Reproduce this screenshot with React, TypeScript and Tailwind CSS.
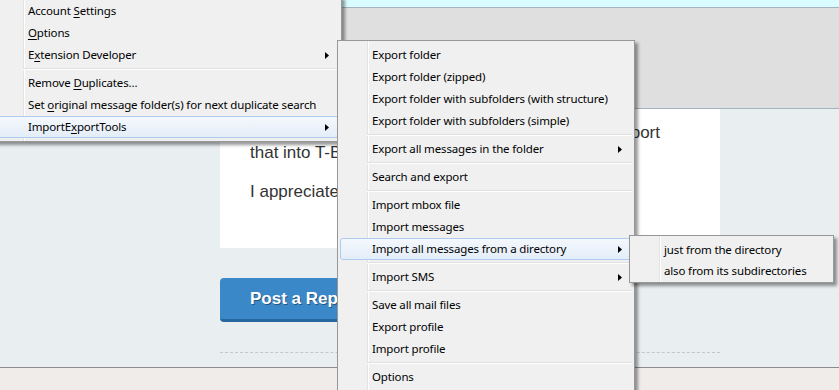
import React from "react";

type Entry = { label: React.ReactNode; sub?: boolean; hl?: boolean } | "sep";

function Arrow() {
  return (
    <svg width="4" height="7" viewBox="0 0 4 7">
      <path d="M0 0 L4 3.5 L0 7 Z" fill="#000" />
    </svg>
  );
}

function Menu({ items, className, rowH = "h-[22px]" }: { items: Entry[]; className: string; rowH?: string }) {
  return (
    <div
      className={`absolute border border-[#979797] bg-[#f0f0f0] px-[2px] py-[3px] shadow-[3px_3px_3px_rgba(0,0,0,0.4)] font-['Noto_Sans',sans-serif] text-[11.5px] tracking-[-0.15px] text-black ${className}`}
    >
      {/* gutter */}
      <div className="absolute top-0 bottom-0 left-[29px] w-px bg-[#e2e3e3] shadow-[1px_0_0_#ffffff]" />
      {items.map((it, i) =>
        it === "sep" ? (
          <div key={i} className="relative h-[6px] ml-[27px] pt-[2px]">
            <div className="h-px bg-[#e0e0e0] shadow-[0_1px_0_#ffffff]" />
          </div>
        ) : (
          <div
            key={i}
            className={`relative flex ${rowH} items-center justify-between pl-[31px] pr-[9px] rounded-[3px] border whitespace-nowrap ${
              it.hl ? "border-[#aecbee] bg-gradient-to-b from-[#f4f8fd] to-[#e4edf8]" : "border-transparent"
            }`}
          >
            <span>{it.label}</span>
            {it.sub && <Arrow />}
          </div>
        )
      )}
    </div>
  );
}

const u = (s: string) => <span className="underline underline-offset-2">{s}</span>;

export default function App() {
  const toolsMenu: Entry[] = [
    { label: <>Account {u("S")}ettings</> },
    { label: <>{u("O")}ptions</> },
    { label: <>E{u("x")}tension Developer</>, sub: true },
    "sep",
    { label: <>Remove {u("D")}uplicates...</> },
    { label: <>Set {u("o")}riginal message folder(s) for next duplicate search</> },
    { label: <>ImportE{u("x")}portTools</>, sub: true, hl: true },
  ];

  const ietMenu: Entry[] = [
    { label: "Export folder" },
    { label: "Export folder (zipped)" },
    { label: "Export folder with subfolders (with structure)" },
    { label: "Export folder with subfolders (simple)" },
    "sep",
    { label: "Export all messages in the folder", sub: true },
    "sep",
    { label: "Search and export" },
    "sep",
    { label: "Import mbox file" },
    { label: "Import messages" },
    { label: "Import all messages from a directory", sub: true, hl: true },
    "sep",
    { label: "Import SMS", sub: true },
    "sep",
    { label: "Save all mail files" },
    { label: "Export profile" },
    { label: "Import profile" },
    "sep",
    { label: "Options" },
  ];

  const dirMenu: Entry[] = [{ label: "just from the directory" }, { label: "also from its subdirectories" }];

  return (
    <div className="relative w-[839px] h-[390px] overflow-hidden bg-[#e9eef1] flex flex-col">
      {/* browser chrome */}
      <div className="h-[8px] shrink-0 bg-[#d9fdff] border-b border-[#a3b3c3]" />
      <div className="h-[101px] shrink-0 bg-[#dfdfdf] border-b border-[#a3b3c3]" />

      {/* forum page */}
      <div className="flex-1 pl-[220px] flex flex-col font-['Liberation_Sans',Arial,sans-serif]">
        <div className="w-[500px] h-[139px] shrink-0 bg-white pl-[30px] pt-[14px] text-[17px] leading-[20px] text-[#333]">
          <div className="w-[410px] text-right whitespace-nowrap">I have a lot of saved mails that I want to export</div>
          <div className="whitespace-nowrap">that into T-Bird.</div>
          <div className="mt-[19px] whitespace-nowrap">I appreciate any help.</div>
        </div>
        <button className="mt-[30px] w-[190px] h-[44px] shrink-0 rounded-[4px] bg-[#3b88c9] border-b-[3px] border-[#25679f] pl-[30px] text-left text-[17px] font-bold text-white [text-shadow:1px_1px_0_rgba(0,0,0,0.4)]">
          Post a Reply
        </button>
        <div className="mt-[30px] w-[500px] border-t border-dashed border-[#c3c7cb]" />
      </div>

      <div className="h-[23px] shrink-0 border-t border-[#8c8c8c] bg-[#efecea]" />

      {/* context menus */}
      <Menu items={toolsMenu} className="left-[-7px] top-[-4px] w-[349px]" />
      <Menu items={ietMenu} className="left-[337px] top-[40px] w-[298px]" />
      <Menu items={dirMenu} rowH="h-[21px]" className="left-[629px] top-[235px] w-[205px] pb-[1px]" />
    </div>
  );
}
